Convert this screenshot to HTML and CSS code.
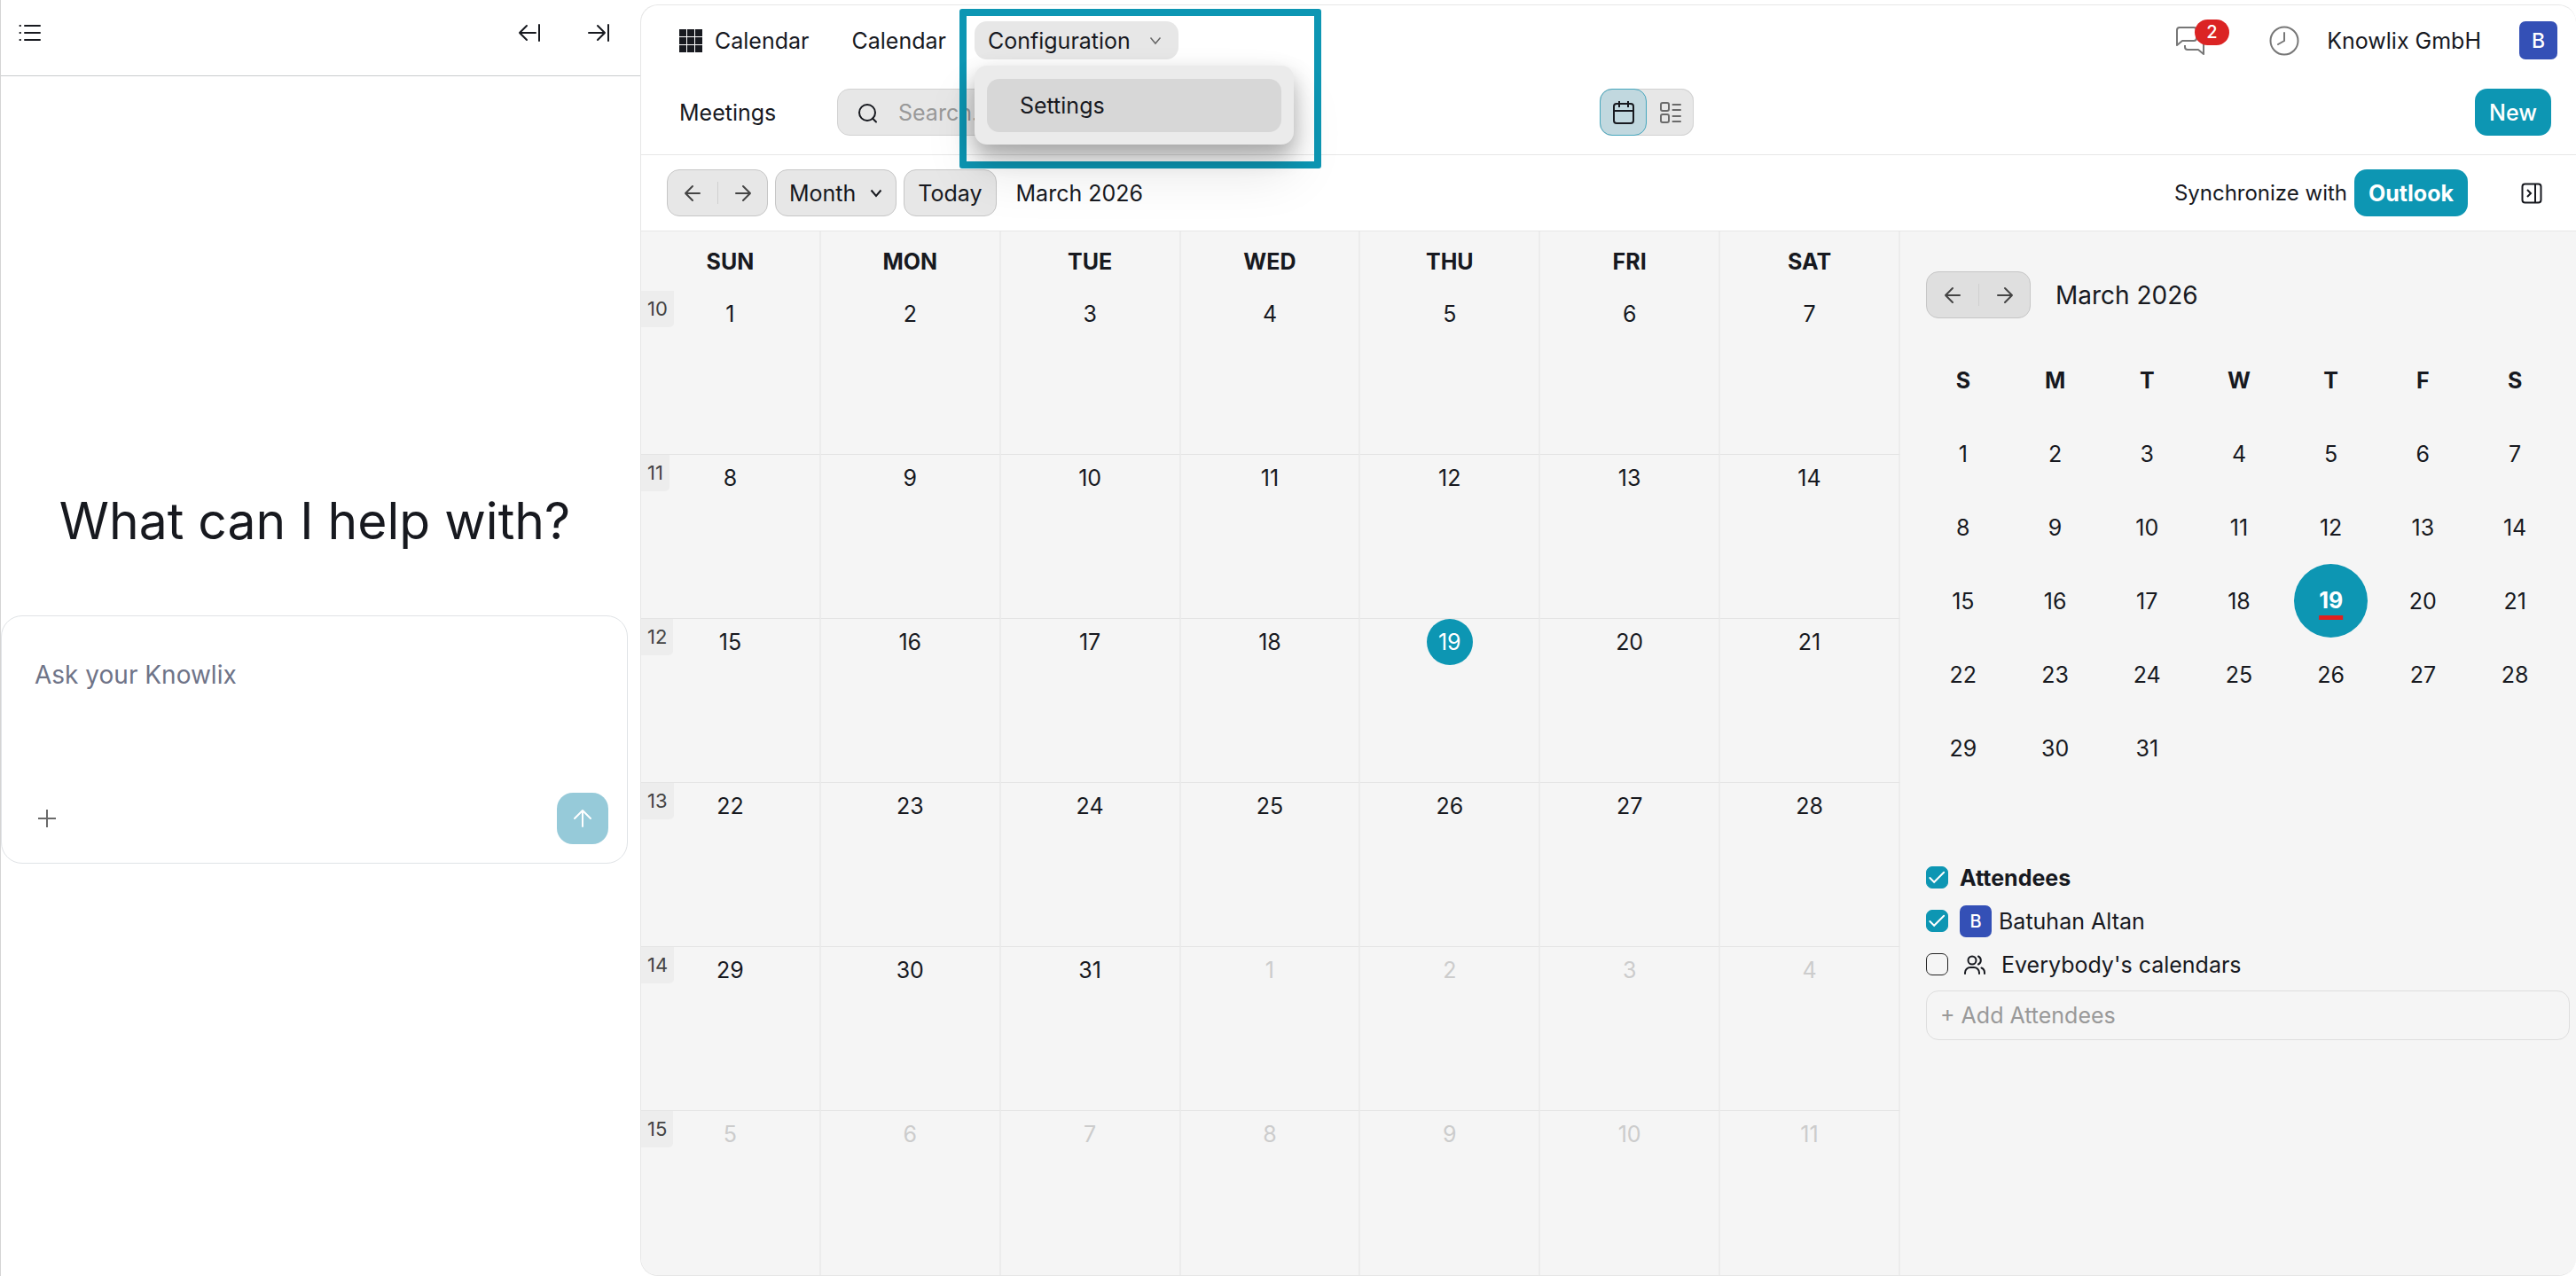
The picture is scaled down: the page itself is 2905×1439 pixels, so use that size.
FILE: index.html
```html
<!DOCTYPE html>
<html lang="en">
<head>
<meta charset="utf-8">
<meta name="viewport" content="width=device-width, initial-scale=1">
<title>Calendar</title>
<link rel="stylesheet" href="styles.css">
</head>
<body>
<div class="app">
  <aside class="assistant">
    <header class="assistant-header">
      <button class="icon-btn" type="button" aria-label="Conversations">
        <svg width="26" height="22" viewBox="0 0 26 22" fill="none" stroke="currentColor" stroke-width="2" stroke-linecap="round"><path d="M7 3h17M7 11h17M7 19h17M1.500 3h.5M1.500 11h.5M1.500 19h.5"/></svg>
      </button>
      <div class="assistant-tools">
        <button class="icon-btn" type="button" aria-label="Collapse left">
          <svg width="26" height="22" viewBox="0 0 26 22" fill="none" stroke="currentColor" stroke-width="2" stroke-linecap="round" stroke-linejoin="round"><path d="M24 2v18M20 11H2M10 3l-8 8 8 8"/></svg>
        </button>
        <button class="icon-btn" type="button" aria-label="Collapse right">
          <svg width="26" height="22" viewBox="0 0 26 22" fill="none" stroke="currentColor" stroke-width="2" stroke-linecap="round" stroke-linejoin="round"><path d="M24 2v18M2 11h18M12 3l8 8-8 8"/></svg>
        </button>
      </div>
    </header>
    <h1 class="assistant-title">What can I help with?</h1>
    <form class="composer">
      <textarea class="composer-input" aria-label="Message" placeholder="Ask your Knowlix"></textarea>
      <div class="composer-actions">
        <button class="icon-btn attach" type="button" aria-label="Attach">
          <svg width="24" height="24" viewBox="0 0 24 24" fill="none" stroke="currentColor" stroke-width="2"><path d="M12 2v20M2 12h20"/></svg>
        </button>
        <button class="send" type="button" aria-label="Send">
          <svg width="24" height="24" viewBox="0 0 24 24" fill="none" stroke="currentColor" stroke-width="2" stroke-linecap="round" stroke-linejoin="round"><path d="M12 21V3M3 12l9-9 9 9"/></svg>
        </button>
      </div>
    </form>
  </aside>

  <main class="workspace">
    <nav class="navbar">
      <a class="brand" href="#">
        <svg width="26" height="26" viewBox="0 0 26 26" fill="currentColor"><path d="M0 0h8v8H0zM9 0h8v8H9zM18 0h8v8h-8zM0 9h8v8H0zM9 9h8v8H9zM18 9h8v8h-8zM0 18h8v8H0zM9 18h8v8H9zM18 18h8v8h-8z"/></svg>
        Calendar
      </a>
      <a class="nav-link" href="#">Calendar</a>
      <div class="nav-menu">
        <button class="nav-menu-toggle" type="button" aria-expanded="true">Configuration
          <svg width="14" height="10" viewBox="0 0 14 10" fill="none" stroke="#666" stroke-width="1.500"><path d="M1.500 1.500L7 8l5.500-6.500"/></svg>
        </button>
        <div class="dropdown"><a class="dropdown-item" href="#">Settings</a></div>
        <div class="highlight"></div>
      </div>
      <div class="systray">
        <button class="icon-btn messages" type="button" aria-label="Messages">
          <svg width="34" height="34" viewBox="0 0 34 34" fill="none" stroke="currentColor" stroke-width="2" stroke-linejoin="round"><path d="M4 2h17a3 3 0 0 1 3 3v9a3 3 0 0 1-3 3H8l-6 5V5a3 3 0 0 1 3-3z"/><path d="M11 22v2a3 3 0 0 0 3 3h12l6 5V14a3 3 0 0 0-2-2"/></svg>
          <span class="badge">2</span>
        </button>
        <button class="icon-btn" type="button" aria-label="Activities">
          <svg width="34" height="34" viewBox="0 0 34 34" fill="none" stroke="currentColor" stroke-width="2" stroke-linecap="round"><circle cx="17" cy="17" r="15.500"/><path d="M17 8v9l-7 4"/></svg>
        </button>
        <a class="company" href="#">Knowlix GmbH</a>
        <button class="avatar" type="button">B</button>
      </div>
    </nav>

    <div class="control-panel">
      <span class="view-title">Meetings</span>
      <label class="search">
        <svg width="24" height="24" viewBox="0 0 24 24" fill="none" stroke="currentColor" stroke-width="2" stroke-linecap="round"><circle cx="11" cy="12" r="9"/><path d="M17 18.500l4 4"/></svg>
        <input class="search-input" type="text" placeholder="Search..." aria-label="Search">
      </label>
      <div class="view-switch">
        <button class="view-btn active" type="button" aria-label="Calendar view">
          <svg width="26" height="28" viewBox="0 0 26 28" fill="none" stroke="currentColor" stroke-width="2"><rect x="2" y="4" width="22" height="22" rx="3"/><path d="M2 12h22M8 1v7M18 1v7"/></svg>
        </button>
        <button class="view-btn" type="button" aria-label="List view">
          <svg width="26" height="26" viewBox="0 0 26 26" fill="none" stroke="currentColor" stroke-width="2" stroke-linecap="round"><rect x="2" y="2" width="9" height="9" rx="2"/><rect x="2" y="15" width="9" height="9" rx="2"/><path d="M15.500 4H24M15.500 10H24M15.500 17H24M15.500 23H24"/></svg>
        </button>
      </div>
      <button class="primary" type="button">New</button>
    </div>

    <div class="toolbar">
      <div class="pager">
        <button class="pager-btn" type="button" aria-label="Previous month"><svg width="20" height="20" viewBox="0 0 20 20" fill="none" stroke="currentColor" stroke-width="2" stroke-linecap="round" stroke-linejoin="round"><path d="M18 10H2M10 2l-8 8 8 8"/></svg></button>
        <button class="pager-btn" type="button" aria-label="Next month"><svg width="20" height="20" viewBox="0 0 20 20" fill="none" stroke="currentColor" stroke-width="2" stroke-linecap="round" stroke-linejoin="round"><path d="M2 10h16M10 2l8 8-8 8"/></svg></button>
      </div>
      <button class="tool-btn" type="button">Month
        <svg width="14" height="10" viewBox="0 0 14 10" fill="none" stroke="currentColor" stroke-width="2"><path d="M1.500 1.500L7 8l5.500-6.500"/></svg>
      </button>
      <button class="tool-btn" type="button">Today</button>
      <span class="period">March 2026</span>
      <span class="sync-label">Synchronize with</span>
      <button class="primary strong" type="button">Outlook</button>
      <button class="icon-btn panel-toggle" type="button" aria-label="Toggle side panel">
        <svg width="24" height="24" viewBox="0 0 24 24" fill="none" stroke="currentColor" stroke-width="2"><rect x="1.500" y="1.500" width="21" height="21" rx="3"/><path d="M16 2v20"/><path d="M7 8l4 4-4 4"/></svg>
      </button>
    </div>

    <div class="content">
      <table class="month">
        <thead><tr><th>SUN</th><th>MON</th><th>TUE</th><th>WED</th><th>THU</th><th>FRI</th><th>SAT</th></tr></thead>
        <tbody>
          <tr><td><span class="week">10</span>1</td><td>2</td><td>3</td><td>4</td><td>5</td><td>6</td><td>7</td></tr>
          <tr><td><span class="week">11</span>8</td><td>9</td><td>10</td><td>11</td><td>12</td><td>13</td><td>14</td></tr>
          <tr><td><span class="week">12</span>15</td><td>16</td><td>17</td><td>18</td><td><span class="today">19</span></td><td>20</td><td>21</td></tr>
          <tr><td><span class="week">13</span>22</td><td>23</td><td>24</td><td>25</td><td>26</td><td>27</td><td>28</td></tr>
          <tr><td><span class="week">14</span>29</td><td>30</td><td>31</td><td class="other">1</td><td class="other">2</td><td class="other">3</td><td class="other">4</td></tr>
          <tr><td class="other"><span class="week">15</span>5</td><td class="other">6</td><td class="other">7</td><td class="other">8</td><td class="other">9</td><td class="other">10</td><td class="other">11</td></tr>
        </tbody>
      </table>

      <aside class="side">
        <div class="side-head">
          <div class="pager dark">
            <button class="pager-btn" type="button" aria-label="Previous"><svg width="20" height="20" viewBox="0 0 20 20" fill="none" stroke="currentColor" stroke-width="2" stroke-linecap="round" stroke-linejoin="round"><path d="M18 10H2M10 2l-8 8 8 8"/></svg></button>
            <button class="pager-btn" type="button" aria-label="Next"><svg width="20" height="20" viewBox="0 0 20 20" fill="none" stroke="currentColor" stroke-width="2" stroke-linecap="round" stroke-linejoin="round"><path d="M2 10h16M10 2l8 8-8 8"/></svg></button>
          </div>
          <span class="side-title">March 2026</span>
        </div>
        <table class="mini">
          <thead><tr><th>S</th><th>M</th><th>T</th><th>W</th><th>T</th><th>F</th><th>S</th></tr></thead>
          <tbody>
            <tr><td>1</td><td>2</td><td>3</td><td>4</td><td>5</td><td>6</td><td>7</td></tr>
            <tr><td>8</td><td>9</td><td>10</td><td>11</td><td>12</td><td>13</td><td>14</td></tr>
            <tr><td>15</td><td>16</td><td>17</td><td>18</td><td><span class="mini-today">19</span></td><td>20</td><td>21</td></tr>
            <tr><td>22</td><td>23</td><td>24</td><td>25</td><td>26</td><td>27</td><td>28</td></tr>
            <tr><td>29</td><td>30</td><td>31</td><td></td><td></td><td></td><td></td></tr>
          </tbody>
        </table>
        <div class="attendees">
          <label class="check-row strong"><input class="check" type="checkbox" checked>Attendees</label>
          <label class="check-row"><input class="check" type="checkbox" checked><span class="avatar small">B</span><span class="person">Batuhan Altan</span></label>
          <label class="check-row"><input class="check" type="checkbox">
            <svg class="people" width="26" height="24" viewBox="0 0 26 24" fill="none" stroke="currentColor" stroke-width="2" stroke-linecap="round"><circle cx="10" cy="7" r="4.500"/><path d="M2 22v-1a6 6 0 0 1 6-6h4a6 6 0 0 1 6 6v1M17 2.500a5 5 0 0 1 0 9M20.500 15.500a6 6 0 0 1 3.500 5.500v1"/></svg>
            Everybody's calendars</label>
          <input class="add-attendee" type="text" placeholder="+ Add Attendees" aria-label="Add attendees">
        </div>
      </aside>
    </div>
  </main>
</div>
</body>
</html>
```
FILE: styles.css
```css
:root {
  --ink: #17191f;
  --muted: #6a6a6a;
  --accent: #0d96b3;
  --line: #e6e6e6;
  --fill: #e7e7e7;
  --indigo: #3450b6;
}

* { box-sizing: border-box; }

body {
  margin: 0;
  background: #fff;
  color: var(--ink);
  font: 400 25px/32px Inter, "Liberation Sans", sans-serif;
}

button, input, textarea { font: inherit; color: inherit; margin: 0; }
button { border: 0; padding: 0; background: none; cursor: pointer; }
a { color: inherit; text-decoration: none; }
svg { display: block; flex: none; }

.app { display: flex; min-height: 100vh; }

/* Assistant panel */
.assistant {
  flex: 0 0 722px;
  display: flex;
  flex-direction: column;
  border-left: 1px solid #d4d4d4;
}
.assistant-header {
  display: flex;
  justify-content: space-between;
  height: 86px;
  padding: 26px 34px 0 20px;
  border-bottom: 1px solid #c9cccd;
}
.assistant-tools { display: flex; gap: 52px; }
.icon-btn { display: flex; align-items: center; align-self: flex-start; }
.assistant-title {
  margin: 464px 13px 0 0;
  text-align: center;
  font-size: 57px;
  font-weight: 400;
  line-height: 76px;
}
.composer {
  display: flex;
  flex-direction: column;
  height: 280px;
  margin: 68px 14px 0 0;
  padding: 48px 21px 21px;
  border: 1px solid #e0e3e6;
  border-radius: 24px;
}
.composer-input {
  flex: 1;
  border: 0;
  padding: 0 16px;
  background: none;
  resize: none;
  outline: 0;
  font-size: 28px;
  line-height: 36px;
}
.composer-input::placeholder { color: #6f7488; opacity: 1; }
.composer-actions { display: flex; justify-content: space-between; align-items: center; }
.attach { align-self: center; margin-left: 18px; color: var(--muted); }
.send {
  display: flex;
  align-items: center;
  justify-content: center;
  width: 58px;
  height: 58px;
  border-radius: 18px;
  background: #96cad9;
  color: #fff;
}

/* Workspace */
.workspace {
  flex: 1;
  min-width: 0;
  margin-top: 5px;
  border: 1px solid var(--line);
  border-right: 0;
  border-radius: 20px;
  overflow: hidden;
}
.navbar { display: flex; align-items: center; padding: 18px 21px 0 43px; }
.brand { display: flex; align-items: center; gap: 14px; }
.nav-link { margin-left: 48px; }
.nav-menu { position: relative; margin-left: 32px; }
.nav-menu-toggle {
  display: flex;
  align-items: center;
  gap: 21px;
  height: 43px;
  padding: 0 19px 0 15px;
  border-radius: 14px;
  background: var(--fill);
}
.dropdown {
  position: absolute;
  z-index: 2;
  top: 50px;
  left: 0;
  width: 360px;
  padding: 15px 14px 14px;
  border-radius: 14px;
  background: #ebebeb;
  box-shadow: 0 12px 24px rgba(0, 0, 0, .3), 0 32px 60px rgba(0, 0, 0, .1);
}
.dropdown-item {
  display: block;
  padding: 14px 37px;
  border-radius: 14px;
  background: #d7d7d7;
}
.highlight {
  position: absolute;
  z-index: 1;
  top: -14px;
  left: -17px;
  width: 408px;
  height: 180px;
  border: 8px solid var(--accent);
  border-radius: 3px;
}
.systray { display: flex; align-items: center; margin-left: auto; }
.systray .icon-btn { align-self: center; margin-right: 31px; color: #777; }
.systray .messages { position: relative; margin-right: 72px; }
.badge {
  position: absolute;
  top: -7px;
  left: 22px;
  padding: 0 13px;
  border-radius: 15px;
  background: #db2424;
  color: #fff;
  font-size: 20px;
  font-weight: 500;
  line-height: 29px;
}
.avatar {
  width: 43px;
  height: 43px;
  border-radius: 7px;
  background: var(--indigo);
  color: #fff;
  font-size: 23px;
  font-weight: 500;
}
.company { margin-right: 43px; }

.control-panel {
  display: grid;
  grid-template-columns: 178px 500px 1fr auto;
  align-items: center;
  padding: 33px 28px 21px 43px;
  border-bottom: 1px solid var(--line);
}
.search {
  display: flex;
  align-items: center;
  gap: 22px;
  height: 53px;
  padding: 0 22px;
  border: 1px solid #d2d2d2;
  border-radius: 14px;
  background: var(--fill);
}
.search-input { flex: 1; min-width: 0; border: 0; padding: 0; background: none; outline: 0; }
.search-input::placeholder, .add-attendee::placeholder { color: #999; opacity: 1; }
.view-switch {
  display: flex;
  justify-self: start;
  margin-left: 360px;
  border-radius: 14px;
  background: var(--fill);
  box-shadow: inset 0 0 0 1px #d2d2d2;
}
.view-btn {
  display: flex;
  align-items: center;
  justify-content: center;
  width: 53px;
  height: 53px;
  border-radius: 14px;
  color: var(--muted);
}
.view-btn.active { background: #c1d8df; border: 1px solid #45a6bd; color: var(--ink); }
.primary {
  height: 53px;
  padding: 0 16px;
  border-radius: 14px;
  background: var(--accent);
  color: #fff;
  font-weight: 500;
}
.strong { font-weight: 700; }

.toolbar {
  display: flex;
  align-items: center;
  gap: 8px;
  padding: 16px 38px 16px 29px;
  border-bottom: 1px solid var(--line);
}
.pager {
  display: flex;
  align-items: center;
  height: 53px;
  border: 1px solid #c6c6c6;
  border-radius: 14px;
  background: var(--fill);
}
.pager-btn { display: flex; align-items: center; justify-content: center; width: 56px; height: 25px; color: #444; }
.pager-btn + .pager-btn { border-left: 1px solid #d0d0d0; }
.pager.dark { background: #dfdfdf; }
.pager.dark .pager-btn { width: 58px; }
.tool-btn {
  display: flex;
  align-items: center;
  gap: 16px;
  height: 53px;
  padding: 0 15px;
  border: 1px solid #c6c6c6;
  border-radius: 14px;
  background: var(--fill);
}
.period { margin-left: 14px; }
.sync-label { margin-left: auto; font-size: 24px; }
.panel-toggle { align-self: center; margin-left: 52px; }

.content { display: flex; background: #f5f5f5; }

.month {
  flex: 1 1 0;
  width: 100%;
  min-width: 0;
  table-layout: fixed;
  border-collapse: separate;
  border-spacing: 0;
}
.month th { height: 67px; padding: 0; border-right: 2px solid #ececec; vertical-align: middle; }
.month td {
  position: relative;
  height: 185px;
  padding: 0;
  border-right: 2px solid #ececec;
  border-bottom: 1px solid #e4e4e4;
  text-align: center;
  vertical-align: top;
  line-height: 52px;
}
.month tr:last-child td { border-bottom: 0; }
.month .other { color: #ccc; }
.week {
  position: absolute;
  top: 0;
  left: 0;
  padding: 0 7px;
  border-bottom-right-radius: 5px;
  background: #ededed;
  color: #444;
  font-size: 22px;
  line-height: 41px;
}
.today {
  display: block;
  width: 52px;
  margin: 0 auto;
  border-radius: 50%;
  background: var(--accent);
  color: #fff;
}

.side { flex: 0 0 762px; padding-bottom: 24px; }
.side-head { display: flex; align-items: center; gap: 28px; padding: 45px 29px 0; }
.side-title { font-size: 28px; }
.mini { width: 726px; margin: 28px 0 0 19px; table-layout: fixed; border-collapse: collapse; }
.mini th, .mini td { height: 83px; padding: 0; text-align: center; }
.mini-today {
  display: block;
  width: 83px;
  margin: 0 auto;
  border-radius: 50%;
  background: var(--accent);
  color: #fff;
  font-weight: 700;
  line-height: 83px;
  text-decoration: underline 5px #e0201f;
  text-underline-offset: 8px;
}

.attendees { display: flex; flex-direction: column; margin-top: 80px; padding: 0 7px 0 29px; }
.check-row { display: flex; align-items: center; height: 49px; }
.check {
  appearance: none;
  flex: none;
  width: 25px;
  height: 25px;
  margin-right: 13px;
  border: 1px solid #222;
  border-radius: 7px;
}
.check:checked {
  border-color: var(--accent);
  background: var(--accent) url("data:image/svg+xml,%3Csvg xmlns='http://www.w3.org/2000/svg' viewBox='0 0 24 24' fill='none' stroke='white' stroke-width='2' stroke-linecap='round'%3E%3Cpath d='M3.500 12.500l5 5L20 6'/%3E%3C/svg%3E") center / cover;
}
.avatar.small { width: 36px; height: 36px; margin-right: 8px; text-align: center; font-size: 20px; line-height: 36px; }
.people { margin: 0 17px 0 4px; }
.add-attendee {
  height: 56px;
  margin-top: 5px;
  padding: 0 15px;
  border: 1px solid #dedede;
  border-radius: 14px;
  background: none;
}
```
